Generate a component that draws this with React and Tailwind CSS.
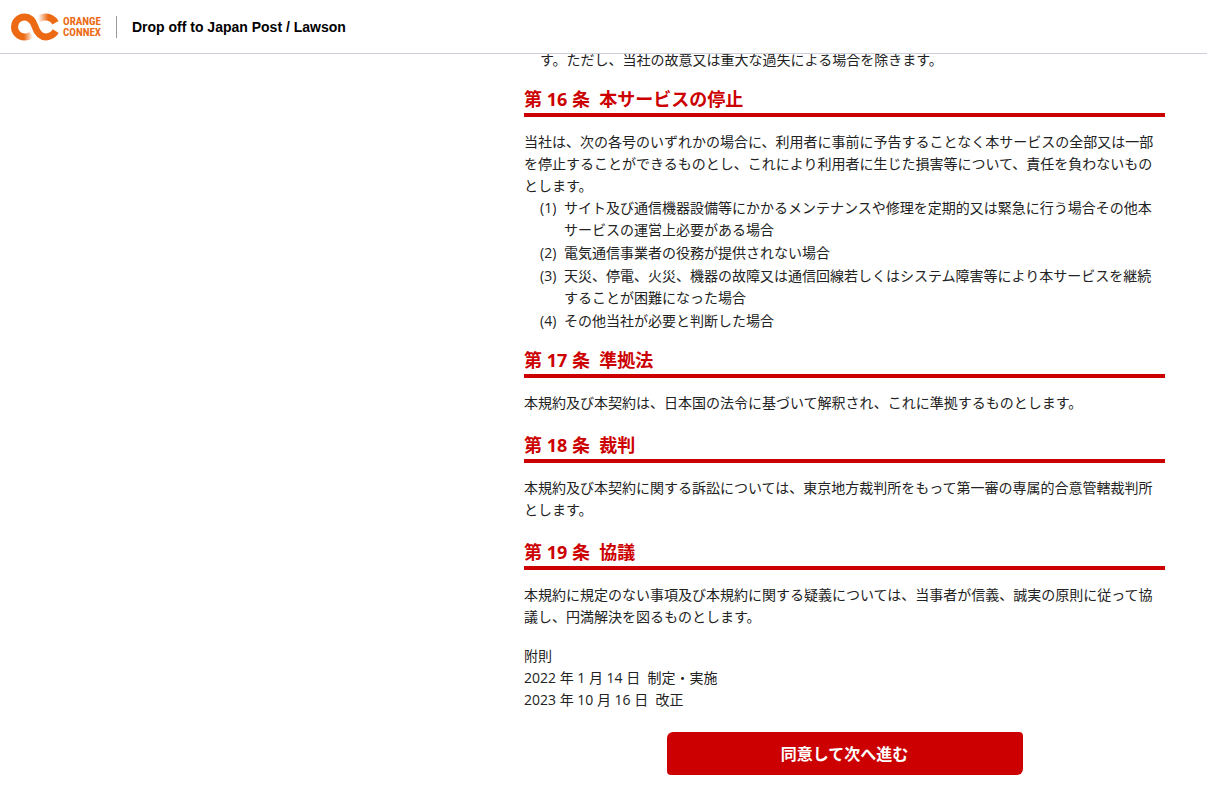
import React from "react";

const Header = () => (
  <header className="fixed inset-x-0 top-0 z-10 flex h-[54px] items-center border-b border-[#cfcfdb] bg-white px-[11px]">
    <a href="#" className="flex items-center gap-1" aria-label="Orange Connex">
      <svg width="48" height="28" viewBox="0 0 48 28" fill="none" aria-hidden="true">
        <defs>
          <linearGradient id="fadeLeft" gradientUnits="userSpaceOnUse" x1="13" y1="0" x2="22" y2="0">
            <stop offset="0" stopColor="#ec6a14" />
            <stop offset="1" stopColor="#ec6a14" stopOpacity="0" />
          </linearGradient>
          <linearGradient id="fadeRight" gradientUnits="userSpaceOnUse" x1="27" y1="0" x2="37" y2="0">
            <stop offset="0" stopColor="#ec6a14" stopOpacity="0" />
            <stop offset="1" stopColor="#ec6a14" />
          </linearGradient>
        </defs>
        <path d="M20.5 21.8C18.5 23.2 16 24 13.5 24C8 24 3.5 19.5 3.5 14" stroke="url(#fadeLeft)" strokeWidth="7" />
        <path d="M3.5 14.2C3.5 8.3 8 4 13.5 4C19 4 22.3 8 24.2 14C26.2 20 29.5 23.9 35 23.9C39 23.9 42.5 21.8 44.8 18.2" stroke="#ec6a14" strokeWidth="7" />
        <path d="M27 6C29 4.7 31.8 4 34.5 4C39 4 42.3 6 44.5 9.8" stroke="url(#fadeRight)" strokeWidth="7" />
      </svg>
      <span className="flex flex-col font-['Roboto_Condensed','Liberation_Sans_Narrow','DejaVu_Sans_Condensed',sans-serif] text-[11px] leading-[11px] font-bold text-[#ec6a14]">
        <span>ORANGE</span>
        <span>CONNEX</span>
      </span>
    </a>
    <div className="ml-[15px] h-[22px] w-px bg-[#999999]" />
    <h1 className="ml-[15px] font-['Liberation_Sans',sans-serif] text-[14px] leading-5 font-bold text-black">
      Drop off to Japan Post / Lawson
    </h1>
  </header>
);

const Article = ({ title, children }) => (
  <section>
    <h2 className="mb-[14px] border-b-4 border-[#cc0000] text-[18px] leading-[28px] font-bold whitespace-pre-wrap text-[#cc0000]">
      {title}
    </h2>
    {children}
  </section>
);

const stopCases = [
  "サイト及び通信機器設備等にかかるメンテナンスや修理を定期的又は緊急に行う場合その他本サービスの運営上必要がある場合",
  "電気通信事業者の役務が提供されない場合",
  "天災、停電、火災、機器の故障又は通信回線若しくはシステム障害等により本サービスを継続することが困難になった場合",
  "その他当社が必要と判断した場合",
];

const App = () => {
  return (
    <div className="min-h-screen bg-white font-['Open_Sans','Noto_Sans_CJK_JP',sans-serif] text-[14px] leading-[22px] text-[#222222]" lang="ja">
      <Header />
      <main className="pt-[49px] pr-[42px] pb-3">
        <div className="ml-auto w-full max-w-[641px]">
          <p className="mb-[14px] pl-4">す。ただし、当社の故意又は重大な過失による場合を除きます。</p>

          <Article title="第 16 条  本サービスの停止">
            <p>
              当社は、次の各号のいずれかの場合に、利用者に事前に予告することなく本サービスの全部又は一部を停止することができるものとし、これにより利用者に生じた損害等について、責任を負わないものとします。
            </p>
            <ol className="mb-[14px] flex flex-col gap-px pl-4">
              {stopCases.map((text, index) => (
                <li key={index} className="flex">
                  <span className="w-6 shrink-0">({index + 1})</span>
                  <span>{text}</span>
                </li>
              ))}
            </ol>
          </Article>

          <Article title="第 17 条  準拠法">
            <p className="mb-[17px]">
              本規約及び本契約は、日本国の法令に基づいて解釈され、これに準拠するものとします。
            </p>
          </Article>

          <Article title="第 18 条  裁判">
            <p className="mb-[17px]">
              本規約及び本契約に関する訴訟については、東京地方裁判所をもって第一審の専属的合意管轄裁判所とします。
            </p>
          </Article>

          <Article title="第 19 条  協議">
            <p className="mb-[17px]">
              本規約に規定のない事項及び本規約に関する疑義については、当事者が信義、誠実の原則に従って協議し、円満解決を図るものとします。
            </p>
          </Article>

          <div className="whitespace-pre-wrap">
            <p>附則</p>
            <p>2022 年 1 月 14 日  制定・実施</p>
            <p>2023 年 10 月 16 日  改正</p>
          </div>

          <div className="mt-[21px] flex justify-center">
            <button
              type="button"
              className="h-[43px] w-full max-w-[356px] cursor-pointer rounded-[4px] rounded-tl-[6px] rounded-br-[6px] bg-[#cc0000] text-[16px] font-bold text-white"
            >
              同意して次へ進む
            </button>
          </div>
        </div>
      </main>
    </div>
  );
};

export default App;
